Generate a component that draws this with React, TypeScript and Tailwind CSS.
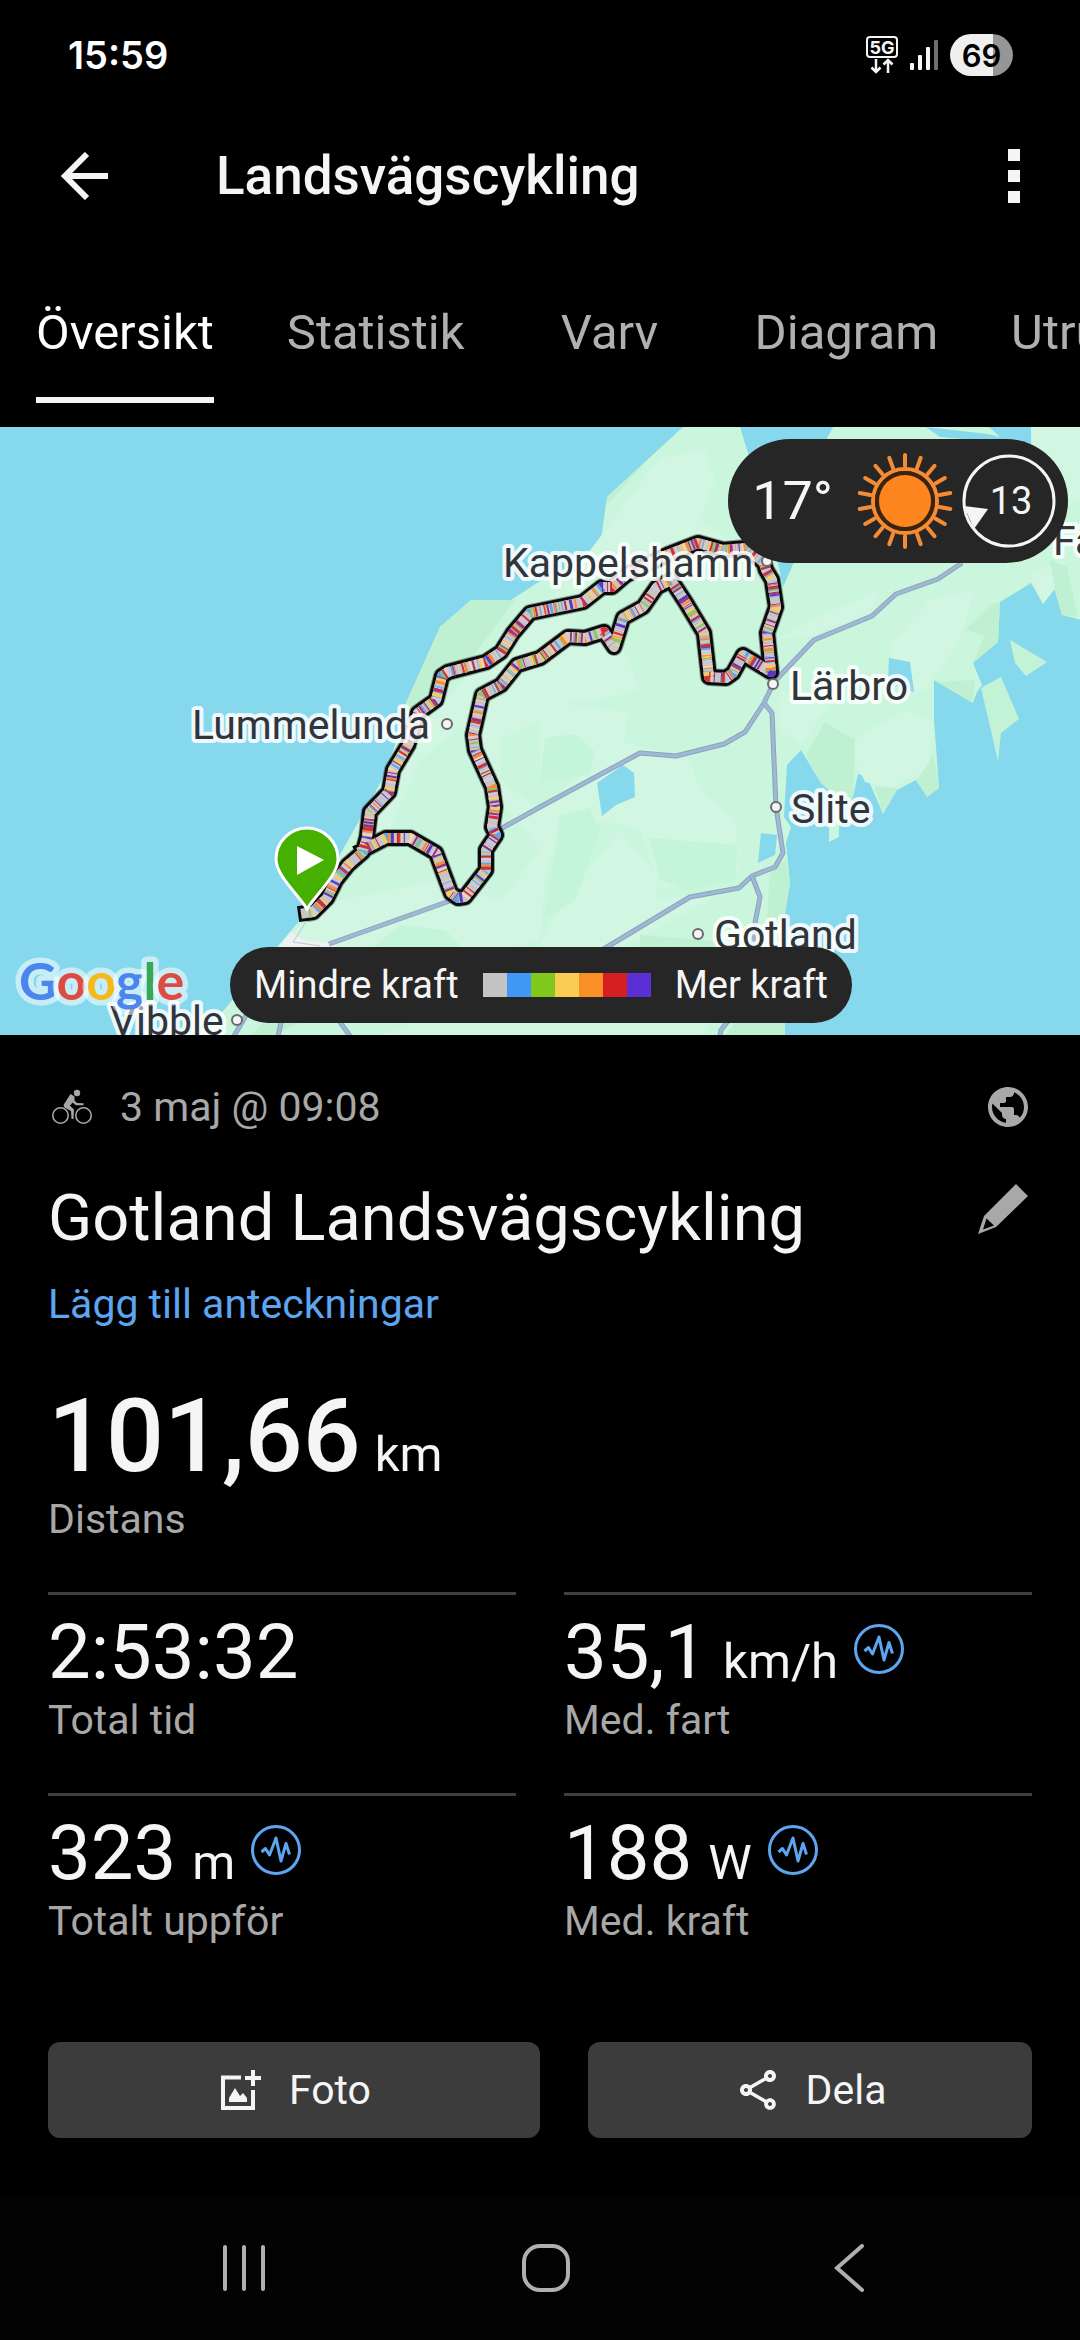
import { MdOutlineShare, MdPublic } from "react-icons/md";

const ROUTE =
  "M306 913 L313 912 L327 898 L336 880 L348 865 L363 852 L367 837 L370 812 L389 792 L393 770 L408 745 L418 713 L436 700 L442 676 L448 672 L486 662 L501 652 L513 633 L530 613 L583 602 L602 587 L612 587 L626 575 L667 555 L698 543 L723 550 L747 548 L764 563 L766 570 L772 580 L776 607 L767 633 L771 672 L743 655 L733 673 L726 678 L709 677 L704 633 L686 603 L671 580 L657 587 L643 607 L623 618 L614 647 L604 632 L585 638 L568 637 L540 658 L517 665 L501 685 L482 695 L473 735 L475 750 L492 787 L495 807 L492 827 L496 835 L486 850 L486 870 L465 897 L458 898 L451 893 L436 853 L410 838 L386 838 L363 850";

const POWER_COLORS = ["#c3c3c3", "#3f97f6", "#80c91c", "#fbcb52", "#fa8f26", "#d61f20", "#5b2fd6"];

function dashes(seed: number) {
  let s = seed * 7919 + 17;
  const next = () => {
    s = (s * 1103515245 + 12345) % 2147483648;
    return s / 2147483648;
  };
  const out: number[] = [];
  for (let i = 0; i < 120; i++) {
    out.push(1 + Math.round(next() * 2), 7 + Math.round(next() * 24));
  }
  return out.join(" ");
}

const STRIPES: [string, number][] = [
  ["#f3d9a4", 1],
  ["#7fb0e0", 10],
  ["#cfc9d6", 6],
  ["#5aa5ee", 2],
  ["#8bc763", 3],
  ["#5b35c4", 7],
  ["#fbcb52", 4],
  ["#a32f74", 11],
  ["#f58a3c", 5],
  ["#d0303a", 8],
  ["#d3cdd0", 9],
];

const ROADS = [
  "M962 563 L938 579 L896 594 L872 616 L814 640 L774 682 L764 703 L745 732 L724 744 L676 756 L640 753 L540 807 L495 832",
  "M764 703 L772 713 L776 807 L783 853 L775 867 L752 876 L739 888 L690 897 L607 947 L560 975",
  "M752 876 L760 897 L755 923 L753 947 L745 1000 L721 1030 L720 1036",
  "M458 898 L329 944",
  "M248 1012 L234 1036",
  "M284 1010 L278 1036",
  "M330 1008 L350 1036",
];

const PLACES = [
  { name: "Kappelshamn", x: 503, y: 577, dx: 767, dy: 561 },
  { name: "Lummelunda", x: 192, y: 739, dx: 447, dy: 724 },
  { name: "Lärbro", x: 790, y: 700, dx: 773, dy: 684 },
  { name: "Slite", x: 791, y: 823, dx: 776, dy: 807 },
  { name: "Gotland", x: 714, y: 949, dx: 698, dy: 934 },
  { name: "Vibble", x: 110, y: 1035, dx: 237, dy: 1020 },
  { name: "Fårö", x: 1053, y: 555, dx: 1130, dy: 540 },
];

function RouteMap() {
  return (
    <svg
      className="block h-[608px] w-full"
      viewBox="0 427 1080 608"
      preserveAspectRatio="xMidYMid slice"
      role="img"
      aria-label="Karta över rutten"
      fontFamily="Roboto, sans-serif"
    >
      <rect x="-600" y="427" width="2280" height="608" fill="#86d8ed" />
      {/* land */}
      <path
        fill="#c9f6dd"
        d="M683 427 L607 497 L599 553 L537 583 L511 600 L471 600 L440 627 L406 703 L394 748 L382 780 L365 810 L341 853 L300 920 L277 947 L224 1010 L198 1036 L785 1036 L785 913 L790 883 L786 843 L791 827 L784 817 L787 765 L801 750 L821 783 L829 790 L829 842 L839 837 L839 817 L853 797 L858 774 L867 777 L883 814 L897 790 L916 780 L927 797 L939 788 L934 720 L934 680 L973 703 L977 692 L982 685 L973 663 L998 642 L1000 602 L1031 583 L1043 604 L1054 588 L1062 615 L1081 620 L1081 427 Z"
      />
      {/* lighter fields */}
      <g fill="#d1f6e1">
        <path d="M660 458 L705 450 L715 480 L700 520 L740 545 L700 560 L640 560 L600 590 L560 640 L620 640 L640 690 L600 700 L550 705 L540 720 L500 740 L500 800 L540 850 L500 900 L440 880 L340 900 L300 925 L277 950 L300 965 L460 962 L540 940 L545 880 L560 830 L600 820 L640 830 L660 890 L740 870 L735 820 L700 790 L690 760 L620 740 L540 810 L500 780 L470 720 L420 760 L390 830 L360 850 L420 730 L480 660 L560 590 Z" />
        <path d="M540 700 L628 712 L622 760 L590 775 L540 778 Z" />
        <path d="M890 645 L930 600 L975 590 L960 640 L925 690 L900 690 Z" />
        <path d="M860 735 L905 710 L934 722 L928 770 L890 788 L865 782 L850 750 Z" />
        <path d="M780 690 L830 705 L800 745 L780 730 Z" />
        <path d="M1031 427 L1080 427 L1080 500 L1040 520 Z M1030 575 L1060 560 L1067 573 L1054 590 L1043 604 Z" />
        <path d="M775 640 L815 618 L880 590 L870 612 L812 635 Z" />
        <path d="M620 830 L660 880 L655 900 L690 895 L740 885 L700 905 L610 955 L560 980 L540 940 L580 880 Z" />
        <path d="M470 1000 L720 1010 L700 1036 L380 1036 Z" />
      </g>
      {/* darker woods */}
      <g fill="#bff0d2">
        <path d="M471 600 L515 600 L470 660 L430 690 L408 715 L406 703 L440 627 Z" />
        <path d="M825 722 L855 740 L853 797 L839 817 L829 790 L821 783 L806 755 Z" />
        <path d="M875 787 L897 788 L883 814 Z M934 755 L939 788 L927 797 L917 780 Z" />
        <path d="M770 870 L786 860 L790 883 L785 913 L785 1036 L725 1036 L745 1010 L765 950 Z" />
        <path d="M973 663 L985 635 L965 630 L990 605 L1000 602 L998 642 Z M937 682 L973 703 L975 680 Z" />
        <path d="M640 935 L700 940 L760 945 L760 1000 L640 960 Z M300 985 L330 1010 L270 1036 L250 1036 Z" />
        <path d="M683 427 L650 458 L607 505 L607 497 Z M1050 560 L1067 567 L1078 617 L1062 615 L1055 588 Z" />
      </g>
      <g fill="#c4f5d8">
        <path d="M400 925 L445 930 L460 945 L430 960 L370 950 Z M560 815 L590 808 L600 830 L575 900 L545 918 Z" />
        <path d="M650 838 L738 845 L735 880 L690 890 L660 880 Z M545 738 L575 734 L595 752 L590 775 L540 782 Z" />
      </g>
      {/* bays and lakes */}
      <g fill="#86d8ed">
        <path d="M740 427 L748 453 L778 563 L783 587 L795 560 L826 440 L833 427 Z" />
        <path d="M926 427 L940 437 L1031 445 L1031 427 L989 427 L1000 437 L988 434 Z" />
        <path d="M889 658 L910 662 L914 692 L888 683 Z" />
        <path d="M597 783 L623 765 L634 773 L635 797 L616 805 L602 816 Z" />
        <path d="M761 833 L777 835 L775 855 L758 863 Z" />
      </g>
      <path
        fill="#c3f3d6"
        d="M1010 640 L1047 662 L1026 676 L1015 663 Z M981 688 L1001 677 L1019 719 L1001 733 L998 761 L988 718 Z"
      />
      {/* town of Visby */}
      <path fill="#eef0f4" d="M291 932 L303 940 L330 943 L345 950 L277 950 Z" />
      <path d="M307 920 L293 942 L320 946" fill="none" stroke="#b9c9cb" strokeWidth="1" />
      {ROADS.map((d) => (
        <g key={d} fill="none" strokeLinejoin="round">
          <path d={d} stroke="#8aa2c6" strokeWidth="5" />
          <path d={d} stroke="#a0b9d0" strokeWidth="3" />
        </g>
      ))}
      {/* ride */}
      <g fill="none" strokeLinejoin="round">
        <path d={ROUTE} stroke="#000" strokeOpacity="0.35" strokeWidth="18" />
        <path d={ROUTE} stroke="#0b0b0b" strokeWidth="16" strokeLinecap="square" />
        <path d={ROUTE} stroke="#c8c4c8" strokeWidth="10" strokeLinecap="square" />
        {STRIPES.map(([color, seed]) => (
          <path
            key={seed}
            d={ROUTE}
            stroke={color}
            strokeWidth="10"
            strokeDasharray={dashes(seed)}
            strokeDashoffset={seed * 37}
          />
        ))}
      </g>
      {/* place names */}
      {PLACES.map((p) => (
        <g key={p.name}>
          <circle cx={p.dx} cy={p.dy} r="5" fill="#f5f3f3" stroke="#6a6a6a" strokeWidth="2" />
          <text
            x={p.x}
            y={p.y}
            fontSize="41"
            fill="#30353b"
            stroke="#fff"
            strokeOpacity="0.85"
            strokeWidth="8"
            strokeLinejoin="round"
            paintOrder="stroke"
          >
            {p.name}
          </text>
        </g>
      ))}
      {/* start marker */}
      <path
        d="M307 909 C299 895 276 876 276 859 A31 31 0 0 1 338 859 C338 876 315 895 307 909 Z"
        fill="#45b000"
        stroke="#fff"
        strokeWidth="3"
      />
      <path d="M297 846 L324 860 L297 875 Z" fill="#fff" />
      {/* map provider */}
      <text
        x="19"
        y="1000"
        fontFamily="Lato, sans-serif"
        fontSize="52"
        fontWeight="700"
        stroke="#fff"
        strokeOpacity="0.55"
        strokeWidth="11"
        strokeLinejoin="round"
        paintOrder="stroke"
      >
        <tspan fill="#4a86ec">G</tspan>
        <tspan fill="#dd4b41">o</tspan>
        <tspan fill="#f5b91b">o</tspan>
        <tspan fill="#4a86ec">g</tspan>
        <tspan fill="#3aa757">l</tspan>
        <tspan fill="#dd4b41">e</tspan>
      </text>
    </svg>
  );
}

function SunIcon() {
  return (
    <svg className="size-24" viewBox="-48 -48 96 96" aria-hidden="true">
      {Array.from({ length: 18 }, (_, i) => (
        <line
          key={i}
          x1="0"
          y1="-35"
          x2="0"
          y2="-46"
          stroke="#f58b33"
          strokeWidth="4"
          strokeLinecap="round"
          transform={`rotate(${i * 20})`}
        />
      ))}
      <circle r="32" fill="none" stroke="#f58b33" strokeWidth="4" />
      <circle r="28" fill="none" stroke="#3a2410" strokeWidth="4" />
      <circle r="26" fill="#ff851f" />
    </svg>
  );
}

function WindBadge() {
  return (
    <div className="relative flex size-24 items-center justify-center">
      <svg className="absolute inset-0" viewBox="-48 -48 96 96" aria-hidden="true">
        <circle r="45" fill="none" stroke="#f5f5f5" strokeWidth="3" />
        <path d="M-45 5 L-21 8 L-35 28 Z" fill="#f5f5f5" />
      </svg>
      <span className="relative pl-1 text-[38px] leading-none">13</span>
    </div>
  );
}

function BikeIcon() {
  return (
    <svg className="h-9 w-10" viewBox="0 0 40 36" fill="none" aria-hidden="true">
      <circle cx="8.500" cy="26.500" r="7.700" stroke="#a8a8a8" strokeWidth="1.600" />
      <circle cx="31.500" cy="26.500" r="7.700" stroke="#a8a8a8" strokeWidth="1.600" />
      <circle cx="25" cy="4" r="3.200" fill="#a8a8a8" />
      <path
        d="M18.500 5 L22.500 7.500 L22.500 11.500 L25 14 L31.500 14.300 L31.500 16.300 L24 16.300 L20.500 13.500 L18 16.800 L22 20.500 L21.500 30 L19.500 30 L19 22 L12.500 18.500 L11.500 16 Z"
        fill="#a8a8a8"
      />
    </svg>
  );
}

function PencilIcon() {
  return (
    <svg className="size-[50px]" viewBox="0 0 50 50" aria-hidden="true">
      <path
        fillRule="evenodd"
        fill="#a8a8a8"
        d="M38 0 L50 12 L18 43 L0 50 L6 32 Z M8.500 34.500 L5 45.500 L16 41.500 Z"
      />
    </svg>
  );
}

function PulseIcon() {
  return (
    <svg className="size-[50px]" viewBox="0 0 50 50" fill="none" stroke="#5ea5f0" aria-hidden="true">
      <circle cx="25" cy="25" r="23.500" strokeWidth="3" />
      <path d="M10.500 27 L14.500 23.500 L18.500 30 L25 13 L30 36 L35 18.500 L38.500 29.500" strokeWidth="3" strokeLinejoin="round" />
    </svg>
  );
}

function AddPhotoIcon() {
  return (
    <svg className="ml-1 size-10" viewBox="0 0 40 40" aria-hidden="true">
      <path d="M20 7.500 H2 V38 H32 V20" fill="none" stroke="#f5f5f5" strokeWidth="4" />
      <path d="M32 0 V16 M24 8 H40" stroke="#f5f5f5" strokeWidth="4" />
      <path d="M8 32 V28 L14 18 L19 26 L22 23 L26 28 V32 Z" fill="#f5f5f5" />
    </svg>
  );
}

function StatusBar() {
  return (
    <div className="flex h-[110px] items-center justify-between pr-[67px] pl-[68px]">
      <time className="font-[Inter,sans-serif] text-[38px] leading-[56px] font-semibold text-white">15:59</time>
      <div className="flex items-center">
        <svg className="h-[38px] w-8" viewBox="0 0 32 38" fill="none" stroke="#f5f5f5" aria-hidden="true">
          <rect x="1" y="1" width="30" height="20" rx="3" strokeWidth="2" />
          <text x="16" y="18" textAnchor="middle" fontFamily="Inter, sans-serif" fontSize="18" fontWeight="700" fill="#f5f5f5" stroke="none">
            5G
          </text>
          <path d="M10 23 V36 M5.500 31.500 L10 36 L14.500 31.500 M22 37 V24 M17.500 28.500 L22 24 L26.500 28.500" strokeWidth="2.500" />
        </svg>
        <svg className="ml-3 h-[30px] w-7" viewBox="0 0 28 30" aria-hidden="true">
          <g fill="#f5f5f5">
            <rect x="0" y="23" width="4" height="7" rx="1" />
            <rect x="8" y="15" width="4" height="15" rx="1" />
            <rect x="16" y="7" width="4" height="23" rx="1" />
          </g>
          <rect x="24" y="0" width="4" height="30" rx="1" fill="#6f6f6f" />
        </svg>
        <span className="ml-3 flex h-[42px] w-[63px] items-center justify-center rounded-full bg-linear-to-r from-[#efefef] from-69% to-[#969696] to-69% font-[Inter,sans-serif] text-[31px] leading-none font-semibold text-black">
          69
        </span>
      </div>
    </div>
  );
}

const TABS = ["Översikt", "Statistik", "Varv", "Diagram", "Utrustning"];

const STATS = [
  { value: "2:53:32", unit: "", label: "Total tid", pulse: false },
  { value: "35,1", unit: "km/h", label: "Med. fart", pulse: true },
  { value: "323", unit: "m", label: "Totalt uppför", pulse: true },
  { value: "188", unit: "W", label: "Med. kraft", pulse: true },
];

export default function App() {
  return (
    <div className="min-h-screen overflow-x-hidden bg-black font-[Roboto,sans-serif] text-[#f5f5f5]">
      <StatusBar />

      <header className="flex h-[132px] items-center pr-[60px] pl-[60px]">
        <button type="button" aria-label="Tillbaka" className="flex w-[156px] items-center">
          <svg className="size-12" viewBox="0 0 48 48" fill="none" stroke="#f5f5f5" strokeWidth="6" aria-hidden="true">
            <path d="M48 24 H5 M27 2 L5 24 L27 46" />
          </svg>
        </button>
        <h1 className="text-[53px] leading-[64px] font-medium">Landsvägscykling</h1>
        <button type="button" aria-label="Fler alternativ" className="ml-auto flex flex-col gap-[9px]">
          <span className="size-3 bg-[#f5f5f5]" />
          <span className="size-3 bg-[#f5f5f5]" />
          <span className="size-3 bg-[#f5f5f5]" />
        </button>
      </header>

      <nav className="flex gap-px overflow-hidden pb-6" role="tablist">
        {TABS.map((tab, i) => (
          <button
            key={tab}
            type="button"
            role="tab"
            aria-selected={i === 0}
            className={
              i === 0
                ? "flex shrink-0 justify-center px-9 text-[49px] leading-[56px] text-white"
                : "flex min-w-[216px] shrink-0 justify-center px-9 text-[49px] leading-[56px] text-[#b0b0b0]"
            }
          >
            <span
              className={
                i === 0
                  ? "border-b-6 border-[#f5f5f5] pt-[63px] pb-9"
                  : "border-b-6 border-transparent pt-[63px] pb-9"
              }
            >
              {tab}
            </span>
          </button>
        ))}
      </nav>

      <main>
        <section className="relative overflow-hidden">
          <RouteMap />
          <div className="absolute top-3 right-3 flex h-[124px] items-center rounded-full bg-[#262626] pr-[11px] pl-6">
            <span className="text-[54px] leading-none">17°</span>
            <span className="ml-6 flex items-center gap-2">
              <SunIcon />
              <WindBadge />
            </span>
          </div>
          <div className="absolute bottom-3 left-[230px] flex h-[76px] items-center gap-6 rounded-full bg-[#262626] px-6 text-[38px] leading-none">
            <span>Mindre kraft</span>
            <span className="flex">
              {POWER_COLORS.map((c) => (
                <span key={c} className="size-6" style={{ backgroundColor: c }} />
              ))}
            </span>
            <span>Mer kraft</span>
          </div>
        </section>

        <section className="px-12 pt-12">
          <div className="flex h-12 items-center text-[41px] leading-[48px] text-[#a8a8a8]">
            <span className="ml-1">
              <BikeIcon />
            </span>
            <time className="ml-7">3 maj @ 09:08</time>
            <MdPublic className="ml-auto size-12" />
          </div>

          <div className="mt-[47px] flex items-start justify-between">
            <h2 className="text-[65px] leading-[80px]">Gotland Landsvägscykling</h2>
            <button type="button" aria-label="Redigera" className="mt-1.5 mr-1">
              <PencilIcon />
            </button>
          </div>
          <a href="#anteckningar" className="mt-[22px] block text-[41px] leading-[48px] text-[#5ea5f0]">
            Lägg till anteckningar
          </a>

          <div className="mt-[52px]">
            <p className="flex items-baseline gap-3.5">
              <span className="text-[102px] leading-[112px] font-medium">101,66</span>
              <span className="text-[49px] leading-none">km</span>
            </p>
            <p className="mt-[3px] text-[41px] leading-[48px] text-[#a8a8a8]">Distans</p>
          </div>

          <dl className="mt-[49px] grid grid-cols-2 gap-x-12">
            {STATS.map((s) => (
              <div key={s.label} className="flex flex-col-reverse border-t-3 border-[#3f3f3f] pt-[13px] pb-[49px]">
                <dt className="text-[41px] leading-[48px] text-[#a8a8a8]">{s.label}</dt>
                <dd className="flex h-[88px] items-start gap-4">
                  <span className="flex items-baseline gap-4">
                    <span className="text-[76px] leading-[88px]">{s.value}</span>
                    {s.unit && <span className="text-[49px] leading-none">{s.unit}</span>}
                  </span>
                  {s.pulse && (
                    <span className="mt-4">
                      <PulseIcon />
                    </span>
                  )}
                </dd>
              </div>
            ))}
          </dl>

          <div className="mt-12 flex gap-12 pb-[58px] text-[41px] leading-[48px]">
            <button type="button" className="flex h-24 flex-[41] items-center justify-center gap-7 rounded-xl bg-[#3c3c3c]">
              <AddPhotoIcon />
              Foto
            </button>
            <button type="button" className="flex h-24 flex-[37] items-center justify-center gap-6 rounded-xl bg-[#3c3c3c]">
              <MdOutlineShare className="size-12" />
              Dela
            </button>
          </div>
        </section>
      </main>

      <footer className="flex h-36 items-center justify-between bg-[#030303] pr-[216px] pl-[222px]">
        <button type="button" aria-label="Senaste appar">
          <svg className="h-12 w-11" viewBox="0 0 44 48" stroke="#b0b0b0" strokeWidth="4" strokeLinecap="round" aria-hidden="true">
            <path d="M3 3 V45 M22 3 V45 M41 3 V45" />
          </svg>
        </button>
        <button type="button" aria-label="Hem" className="mr-2">
          <span className="block size-12 rounded-[18px] border-4 border-[#b0b0b0]" />
        </button>
        <button type="button" aria-label="Bakåt">
          <svg className="h-12 w-[30px]" viewBox="0 0 30 48" fill="none" stroke="#b0b0b0" strokeWidth="4" strokeLinecap="round" aria-hidden="true">
            <path d="M28 2 L3 24 L28 46" />
          </svg>
        </button>
      </footer>
    </div>
  );
}
